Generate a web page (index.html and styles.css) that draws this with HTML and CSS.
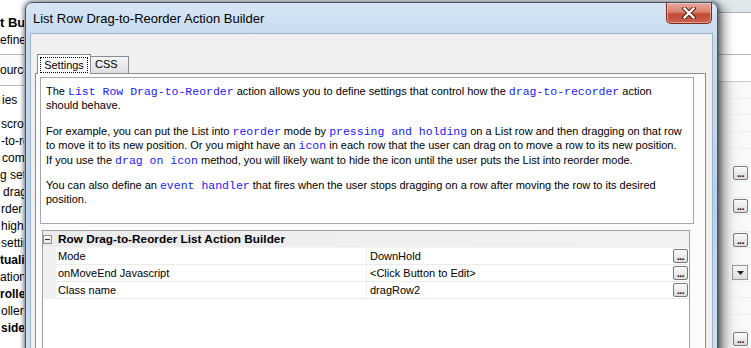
FILE: index.html
```html
<!DOCTYPE html>
<html>
<head>
<meta charset="utf-8">
<title>List Row Drag-to-Reorder Action Builder</title>
<link rel="stylesheet" href="styles.css">
</head>
<body>
<div class="desktop">
  <div class="bg-left">
    <div class="bl-title">t Builder</div>
    <div class="bl-define">efine</div>
    <div class="bl-source">ource</div>
    <div class="bl-props">ies</div>
    <div class="bl-list">
      <div class="bl-item i1">scroll</div>
      <div class="bl-item i1">-to-reorder</div>
      <div class="bl-item i2">com row</div>
      <div class="bl-item">g settings</div>
      <div class="bl-item i3">drag</div>
      <div class="bl-item i1">rder settings</div>
      <div class="bl-item i1">highlight</div>
      <div class="bl-item i1">settings</div>
      <div class="bl-item bold">tualization</div>
      <div class="bl-item">ation tab</div>
      <div class="bl-item bold">roller</div>
      <div class="bl-item i1">oller</div>
      <div class="bl-item bold i1">side</div>
    </div>
  </div>
  <div class="bg-mid"></div>
  <div class="bg-right">
    <div class="br-top"></div>
    <div class="br-a"></div>
    <div class="br-b"></div>
    <div class="br-row"></div>
    <div class="br-row"></div>
    <div class="br-row"></div>
    <div class="br-row"></div>
    <div class="br-row"></div>
    <div class="br-row"><span class="ebtn">...</span></div>
    <div class="br-row"></div>
    <div class="br-row"><span class="ebtn">...</span></div>
    <div class="br-row"></div>
    <div class="br-row"><span class="ebtn">...</span></div>
    <div class="br-row"></div>
    <div class="br-row"><span class="dbtn"><svg width="7" height="4" viewBox="0 0 7 4"><path d="M0 0H7L3.5 4Z" fill="#222"/></svg></span></div>
    <div class="br-row"></div>
    <div class="br-row"></div>
    <div class="br-row"></div>
    <div class="br-row"><span class="ebtn">...</span></div>
  </div>

  <div class="dialog">
    <div class="titlebar">
      <span class="title">List Row Drag-to-Reorder Action Builder</span>
      <span class="close">
        <svg width="14" height="12" viewBox="0 0 14 12">
          <path d="M2.5 1.5L11.5 10.5M11.5 1.5L2.5 10.5" stroke="#5a1a12" stroke-width="4.2" stroke-linecap="square" fill="none"/>
          <path d="M2.5 1.5L11.5 10.5M11.5 1.5L2.5 10.5" stroke="#ffffff" stroke-width="2.3" stroke-linecap="square" fill="none"/>
        </svg>
      </span>
    </div>
    <div class="client">
      <div class="tabctl">
        <div class="tabs">
          <div class="tab sel"><span class="focus">Settings</span></div>
          <div class="tab css">CSS</div>
        </div>
        <div class="panel">
          <div class="textbox">
            <p>The <span class="mono">List Row Drag-to-Reorder</span> action allows you to define settings that control how the <span class="mono">drag-to-recorder</span> action<br>should behave.</p>
            <p>For example, you can put the List into <span class="mono">reorder</span> mode by <span class="mono">pressing and holding</span> on a List row and then dragging on that row<br>to move it to its new position. Or you might have an <span class="mono">icon</span> in each row that the user can drag on to move a row to its new position.<br>If you use the <span class="mono">drag on icon</span> method, you will likely want to hide the icon until the user puts the List into reorder mode.</p>
            <p>You can also define an <span class="mono">event handler</span> that fires when the user stops dragging on a row after moving the row to its desired<br>position.</p>
          </div>
          <div class="grid">
            <div class="grid-head">
              <span class="minus"></span>
              <span class="head-text">Row Drag-to-Reorder List Action Builder</span>
            </div>
            <div class="row">
              <div class="gut"></div>
              <div class="name">Mode</div>
              <div class="val"><span>DownHold</span><span class="ebtn">...</span></div>
            </div>
            <div class="row">
              <div class="gut"></div>
              <div class="name">onMoveEnd Javascript</div>
              <div class="val"><span>&lt;Click Button to Edit&gt;</span><span class="ebtn">...</span></div>
            </div>
            <div class="row">
              <div class="gut"></div>
              <div class="name">Class name</div>
              <div class="val"><span>dragRow2</span><span class="ebtn">...</span></div>
            </div>
          </div>
        </div>
      </div>
    </div>
  </div>
</div>
</body>
</html>
```

FILE: styles.css
```css
* { box-sizing: border-box; }
html, body { margin: 0; padding: 0; }
body { background: #fff; }

.desktop {
  width: 751px;
  height: 348px;
  position: relative;
  overflow: hidden;
  display: flex;
  background: #fff;
  font-family: "Liberation Sans", Arial, sans-serif;
  color: #000;
}

/* ---------- background window, left ---------- */
.bg-left {
  width: 24px;
  flex: none;
  display: flex;
  flex-direction: column;
  font-size: 12px;
  white-space: nowrap;
  overflow: hidden;
}
.bl-title { padding-top: 15px; height: 31px; line-height: 16px; font-weight: bold; font-size: 13px; }
.bl-define { height: 24px; line-height: 18px; border-bottom: 1px solid #b9b9b9; }
.bl-source { height: 31px; line-height: 30px; border-bottom: 1px solid #b9b9b9; background: #fafafa; }
.bl-props { height: 30px; line-height: 29px; padding-left: 2px; }
.bl-list { display: flex; flex-direction: column; }
.bl-item { height: 17px; line-height: 17px; }
.bl-item.i1 { padding-left: 1px; }
.bl-item.i2 { padding-left: 2px; }
.bl-item.i3 { padding-left: 3px; }
.bl-item.bold { font-weight: bold; }

.bg-mid { flex: 1; }

/* ---------- background window, right ---------- */
.bg-right {
  width: 40px;
  flex: none;
  display: flex;
  flex-direction: column;
  background: linear-gradient(to right, #e6e6e6, #f6f6f6 60%, #fbfbfb);
}
.br-top { height: 13px; background: #dfe9ea; border-bottom: 1px solid #a9aeb3; }
.br-a { height: 43px; background: #fff; border-bottom: 1px solid #b5b5b5; }
.br-b { height: 28px; background: #fff; border-bottom: 1px solid #c8c8c8; }
.br-row {
  height: 17px;
  border-bottom: 1px solid #ededed;
  display: flex;
  align-items: center;
  justify-content: flex-end;
  padding-right: 3px;
}
.dbtn {
  width: 16px;
  height: 15px;
  border: 1px solid #9a9a9a;
  background: linear-gradient(#f7f7f7, #dedede);
  display: flex;
  align-items: center;
  justify-content: center;
}

/* ---------- dialog ---------- */
.dialog {
  position: absolute;
  left: 25px;
  top: 2px;
  width: 693px;
  height: 380px;
  border: 1px solid #46576c;
  border-radius: 7px 7px 0 0;
  padding: 0 4px;
  display: flex;
  flex-direction: column;
  background: linear-gradient(to bottom, #d7e6f6 0px, #c9dcf0 30px, #c3d7ec 120px, #b3d3f1 200px, #c6dcf2 300px, #cfe1f4 380px);
  box-shadow: 0 0 5px 1px rgba(20, 30, 45, 0.6), 6px 4px 11px rgba(0, 0, 0, 0.45);
}
.titlebar {
  height: 30px;
  flex: none;
  display: flex;
  align-items: center;
  padding-left: 3px;
}
.title {
  font-size: 13px;
  color: #000;
  white-space: nowrap;
}
.close {
  margin-left: auto;
  margin-right: 1px;
  align-self: flex-start;
  width: 46px;
  height: 21px;
  border: 1px solid #7b2a20;
  border-top: none;
  border-radius: 0 0 5px 5px;
  background: linear-gradient(to bottom, #e9a99c 0%, #d9826f 45%, #c24a33 55%, #c9624b 100%);
  box-shadow: inset 0 0 0 1px rgba(255, 210, 200, 0.55);
  display: flex;
  align-items: center;
  justify-content: center;
}

.client {
  flex: 1;
  border: 1px solid #9fb2c8;
  background: #f0f0f0;
  padding: 20px 6px 0 4px;
  display: flex;
  flex-direction: column;
}
.tabctl {
  flex: 1;
  display: flex;
  flex-direction: column;
}
.tabs {
  display: flex;
  align-items: flex-end;
  height: 19px;
  padding-left: 2px;
  position: relative;
  z-index: 2;
  font-size: 11px;
}
.tab {
  border: 1px solid #898c95;
  border-bottom: none;
  white-space: nowrap;
}
.tab.sel {
  width: 54px;
  height: 20px;
  margin-bottom: -1px;
  background: #fff;
  padding: 2px 2px 0;
  position: relative;
  z-index: 2;
}
.focus {
  display: block;
  height: 16px;
  border: 1px dotted #000;
  line-height: 14px;
  text-align: center;
}
.tab.css {
  width: 39px;
  height: 17px;
  margin-left: -1px;
  padding-left: 4px;
  line-height: 15px;
  background: linear-gradient(to bottom, #f4f4f4, #dfdfdf);
}
.panel {
  flex: 1;
  border: 1px solid #898c95;
  background: #fbfbfb;
  padding: 3px 11px 0 4px;
  display: flex;
  flex-direction: column;
}

.textbox {
  height: 147px;
  flex: none;
  border: 1px solid #a5a7ad;
  background: #fff;
  padding: 6px 0 0 5px;
  font-size: 11px;
  line-height: 14.4px;
  white-space: nowrap;
  overflow: hidden;
}
.textbox p { margin: 0 0 11px; }
.mono {
  font-family: "Liberation Mono", "Courier New", monospace;
  font-size: 11.5px;
  line-height: 1;
  color: #1a1aff;
}

/* ---------- property grid ---------- */
.grid {
  flex: 1;
  margin: 6px 4px 0 2px;
  border: 1px solid #a0a0a0;
  background: #fff;
  font-size: 11px;
}
.grid-head {
  height: 17px;
  display: flex;
  align-items: center;
  background: linear-gradient(to right, #ececec, #f2f2f2);
  border-bottom: 1px solid #f4f4f4;
}
.minus {
  width: 9px;
  height: 9px;
  flex: none;
  border: 1px solid #8e8f8f;
  background: linear-gradient(#fff, #e4e4e4);
  position: relative;
}
.minus::after {
  content: "";
  position: absolute;
  left: 1px;
  right: 1px;
  top: 3px;
  height: 1px;
  background: #333;
}
.head-text {
  margin-left: 6px;
  font-weight: bold;
  font-size: 11.8px;
  white-space: nowrap;
}
.row {
  display: flex;
  height: 17px;
}
.gut {
  width: 13px;
  flex: none;
  background: #f0f0f0;
}
.name {
  width: 311px;
  flex: none;
  padding-left: 2px;
  line-height: 16px;
  border-right: 1px solid #ececec;
  border-bottom: 1px solid #ececec;
  white-space: nowrap;
}
.val {
  flex: 1;
  padding: 0 1px 0 3px;
  display: flex;
  align-items: center;
  justify-content: space-between;
  border-bottom: 1px solid #ececec;
  white-space: nowrap;
}
.ebtn {
  width: 15px;
  height: 14px;
  border: 1px solid #7a7a7a;
  border-radius: 2px;
  background: linear-gradient(#fbfbfb, #dcdcdc);
  font-size: 10px;
  font-weight: bold;
  line-height: 14px;
  text-align: center;
  letter-spacing: -0.5px;
  color: #111;
  overflow: hidden;
}
```
